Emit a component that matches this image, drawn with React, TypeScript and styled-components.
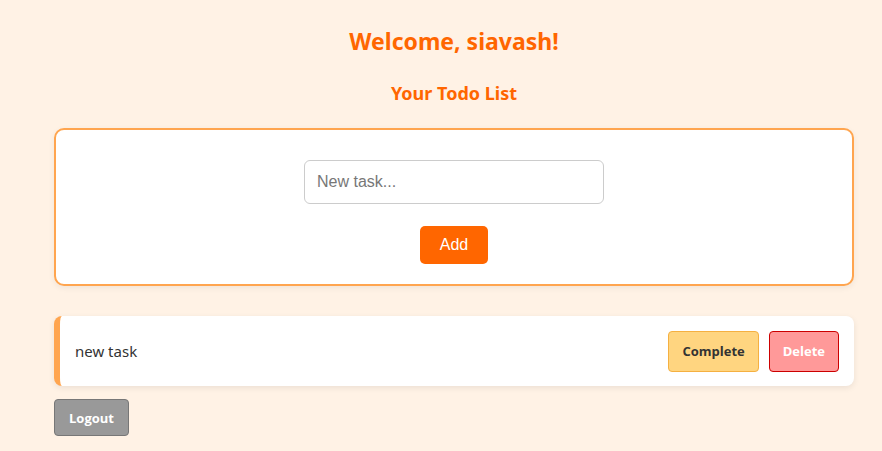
import styled, { createGlobalStyle } from 'styled-components';
import { useState } from 'react';

const GlobalStyle = createGlobalStyle`
  html, body {
    margin: 0;
    padding: 0;
    background-color: #fff2e5;
    font-family: "Noto Sans", "Open Sans", sans-serif;
  }
`;

interface Task {
  id: number
  text: string
  completed: boolean
}

const App = () => {
  const [tasks, setTasks] = useState<Task[]>([{ id: 1, text: 'new task', completed: false }]);
  const [newTask, setNewTask] = useState('');

  const addTask = () => {
    if (!newTask.trim()) return;
    setTasks([...tasks, { id: Date.now(), text: newTask, completed: false }]);
    setNewTask('');
  };

  const toggleTask = (id: number) => {
    setTasks(tasks.map((t) => (t.id === id ? { ...t, completed: !t.completed } : t)));
  };

  const deleteTask = (id: number) => {
    setTasks(tasks.filter((t) => t.id !== id));
  };

  return (
    <>
      <GlobalStyle />
      <Page>
        <Welcome>Welcome, siavash!</Welcome>
        <SubTitle>Your Todo List</SubTitle>
        <AddCard>
          <TaskInput
            type="text"
            placeholder="New task..."
            value={newTask}
            onChange={(e) => setNewTask(e.target.value)}
          />
          <AddButton onClick={addTask}>Add</AddButton>
        </AddCard>
        <TaskList>
          {tasks.map((task) => (
            <TaskRow key={task.id}>
              <TaskText $done={task.completed}>{task.text}</TaskText>
              <Actions>
                <CompleteButton onClick={() => toggleTask(task.id)}>Complete</CompleteButton>
                <DeleteButton onClick={() => deleteTask(task.id)}>Delete</DeleteButton>
              </Actions>
            </TaskRow>
          ))}
        </TaskList>
        <LogoutButton>Logout</LogoutButton>
      </Page>
    </>
  );
};

export default App;

const Page = styled.div`
  width: 800px;
  margin-left: 54px;
  padding-top: 25px;
  display: flex;
  flex-direction: column;
`;

const Welcome = styled.h1`
  margin: 0;
  text-align: center;
  color: #ff6600;
  font-size: 23px;
  font-weight: 700;
  line-height: 32px;
`;

const SubTitle = styled.h2`
  margin: 24px 0 0;
  text-align: center;
  color: #ff6600;
  font-size: 18px;
  font-weight: 700;
  line-height: 24px;
`;

const AddCard = styled.div`
  margin-top: 23px;
  background: #fff;
  border: 2px solid #ffa54f;
  border-radius: 10px;
  box-shadow: 0 2px 6px rgba(0, 0, 0, 0.06);
  padding: 30px 0 20px;
  display: flex;
  flex-direction: column;
  align-items: center;
  gap: 22px;
`;

const TaskInput = styled.input`
  box-sizing: border-box;
  width: 300px;
  height: 44px;
  padding: 0 12px;
  border: 1px solid #ccc;
  border-radius: 6px;
  font-family: "Liberation Sans", Arial, sans-serif;
  font-size: 16px;
  color: #333;
  outline: none;

  &::placeholder {
    color: #777;
  }
`;

const AddButton = styled.button`
  width: 68px;
  height: 38px;
  background: #ff6600;
  color: #fff;
  border: none;
  border-radius: 5px;
  font-family: "Liberation Sans", Arial, sans-serif;
  font-size: 16px;
  cursor: pointer;
`;

const TaskList = styled.div`
  margin-top: 30px;
  display: flex;
  flex-direction: column;
  gap: 10px;
`;

const TaskRow = styled.div`
  box-sizing: border-box;
  height: 70px;
  background: #fff;
  border-left: 6px solid #ffa54f;
  border-radius: 8px;
  box-shadow: 0 2px 6px rgba(0, 0, 0, 0.08);
  padding: 0 15px 0 15px;
  display: flex;
  align-items: center;
  justify-content: space-between;
`;

const TaskText = styled.span<{ $done: boolean }>`
  font-size: 15px;
  color: #333;
  text-decoration: ${(p) => (p.$done ? 'line-through' : 'none')};
`;

const Actions = styled.div`
  display: flex;
  gap: 10px;
`;

const ActionButton = styled.button`
  height: 41px;
  padding: 0 13px;
  border-radius: 4px;
  font-family: "Open Sans", "Noto Sans", sans-serif;
  font-size: 13px;
  font-weight: 700;
  cursor: pointer;
`;

const CompleteButton = styled(ActionButton)`
  background: #ffd580;
  border: 1px solid #f5b041;
  color: #333;
`;

const DeleteButton = styled(ActionButton)`
  background: #ff9999;
  border: 1px solid #cc0000;
  color: #fff;
`;

const LogoutButton = styled.button`
  align-self: flex-start;
  margin-top: 13px;
  height: 37px;
  padding: 0 14px;
  background: #999;
  border: 1px solid #777;
  border-radius: 4px;
  color: #fff;
  font-family: "Open Sans", "Noto Sans", sans-serif;
  font-size: 13px;
  font-weight: 700;
  cursor: pointer;
`;
